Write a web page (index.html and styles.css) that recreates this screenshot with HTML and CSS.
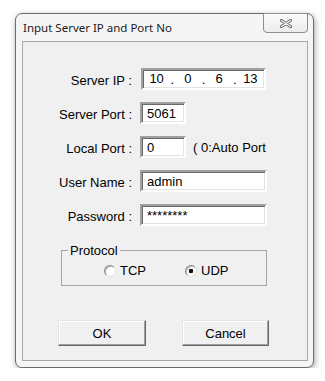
FILE: index.html
```html
<!DOCTYPE html>
<html lang="en">
<head>
    <meta charset="UTF-8">
    <title>Input Server IP and Port No</title>
    <link rel="stylesheet" href="styles.css">
</head>
<body>
    <div class="window">
        <div class="titlebar">
            <span class="title">Input Server IP and Port No</span>
            <div class="close-btn">
                <svg width="12" height="9" viewBox="0 0 12 9" xmlns="http://www.w3.org/2000/svg">
                    <path d="M1.5 1.5L10.5 7.5M10.5 1.5L1.5 7.5" stroke="#6a6a6a" stroke-width="3.2" stroke-linecap="round"/>
                    <path d="M1.5 1.5L10.5 7.5M10.5 1.5L1.5 7.5" stroke="#f4f4f4" stroke-width="1.3" stroke-linecap="round"/>
                </svg>
            </div>
        </div>

        <div class="client">
            <div class="form-grid">
                <label class="field-label">Server IP :</label>
                <div class="ip-box">
                    <span class="ip-part">10</span><span class="ip-dot">.</span>
                    <span class="ip-part">0</span><span class="ip-dot">.</span>
                    <span class="ip-part">6</span><span class="ip-dot">.</span>
                    <span class="ip-part">13</span>
                </div>

                <label class="field-label">Server Port :</label>
                <input class="textbox short" type="text" value="5061">

                <label class="field-label">Local Port :</label>
                <div class="port-row">
                    <input class="textbox short" type="text" value="0">
                    <span class="hint">( 0:Auto Port</span>
                </div>

                <label class="field-label">User Name :</label>
                <input class="textbox wide" type="text" value="admin">

                <label class="field-label">Password :</label>
                <input class="textbox wide" type="text" value="********">
            </div>

            <fieldset class="group">
                <legend>Protocol</legend>
                <div class="radios">
                    <label class="radio"><span class="radio-mark"></span>TCP</label>
                    <label class="radio"><span class="radio-mark checked"></span>UDP</label>
                </div>
            </fieldset>

            <div class="buttons">
                <button class="btn">OK</button>
                <button class="btn cancel">Cancel</button>
            </div>
        </div>
    </div>
</body>
</html>
```

FILE: styles.css
```css
* {
    box-sizing: border-box;
}

body {
    margin: 0;
    background: #ffffff;
    font-family: "Liberation Sans", Arial, sans-serif;
    font-size: 13px;
    color: #000000;
}

.window {
    width: 299px;
    margin: 13px 0 0 15px;
    padding: 0 5px 6px 6px;
    border: 1px solid #6c6c6c;
    border-radius: 7px;
    background: #f5f5f5;
    box-shadow: 1px 2px 6px rgba(0, 0, 0, 0.35);
}

/* Title bar */
.titlebar {
    height: 27px;
    display: flex;
    align-items: center;
    justify-content: space-between;
}

.title {
    padding-left: 1px;
    font-family: "Noto Sans", sans-serif;
    font-size: 11.5px;
    color: #1b1b1b;
}

.close-btn {
    align-self: flex-start;
    margin-top: -1px;
    width: 45px;
    height: 20px;
    border: 1px solid #8e8e8e;
    border-radius: 0 0 4px 4px;
    background: linear-gradient(#fbfbfb, #ececec);
    display: flex;
    align-items: center;
    justify-content: center;
}

/* Client area */
.client {
    border: 1px solid #a8a8a8;
    background: #f0f0f0;
    padding: 26px 0 14px 0;
}

.form-grid {
    display: grid;
    grid-template-columns: 109px auto;
    column-gap: 8px;
    row-gap: 12px;
    justify-items: start;
    align-items: start;
}

.field-label {
    justify-self: end;
    padding-top: 5px;
    line-height: 15px;
    white-space: nowrap;
}

.textbox,
.ip-box {
    height: 22px;
    border: 2px solid;
    border-color: #a0a0a0 #ffffff #ffffff #a0a0a0;
    box-shadow: inset 1px 1px #696969, inset -1px -1px #e3e3e3;
    background: #ffffff;
    font: inherit;
    color: #000000;
    line-height: 18px;
    margin: 0;
}

.textbox {
    padding: 0 5px;
    outline: none;
}

.textbox.short {
    width: 46px;
}

.textbox.wide {
    width: 127px;
}

.ip-box {
    width: 125px;
    margin-left: 1px;
    display: flex;
}

.ip-part {
    flex: 1;
    text-align: center;
}

.ip-dot {
    width: 4px;
    text-align: center;
    position: relative;
    top: 1px;
}

.port-row {
    display: flex;
    align-items: flex-start;
    gap: 7px;
}

.hint {
    padding-top: 4px;
    line-height: 15px;
    white-space: nowrap;
}

/* Protocol group */
.group {
    width: 206px;
    margin: 17px 0 0 38px;
    padding: 6px 0 8px 6px;
    border: 1px solid #a4a4a4;
    min-width: 0;
}

.group legend {
    padding: 0 2px;
    line-height: 15px;
}

.radios {
    display: flex;
    margin-left: 36px;
}

.radio {
    width: 89px;
    height: 13px;
    line-height: 13px;
    display: flex;
    align-items: center;
    gap: 4px;
}

.radio-mark {
    width: 12px;
    height: 12px;
    border-radius: 50%;
    border: 1px solid;
    border-color: #8a8a8a #e4e4e4 #e4e4e4 #8a8a8a;
    box-shadow: inset 1px 1px #b4b4b4;
    background: #ffffff;
}

.radio-mark.checked {
    background: radial-gradient(circle, #111111 0 2px, #ffffff 2.6px);
}

/* Buttons */
.buttons {
    display: flex;
    gap: 36px;
    margin: 34px 0 0 35px;
}

.btn {
    width: 88px;
    height: 26px;
    padding: 0;
    font: inherit;
    color: #000000;
    background: #f0f0f0;
    border: 1px solid;
    border-color: #e3e3e3 #696969 #696969 #e3e3e3;
    box-shadow: inset -1px -1px #a0a0a0, inset 1px 1px #ffffff;
}

.btn.cancel {
    width: 87px;
}
```
